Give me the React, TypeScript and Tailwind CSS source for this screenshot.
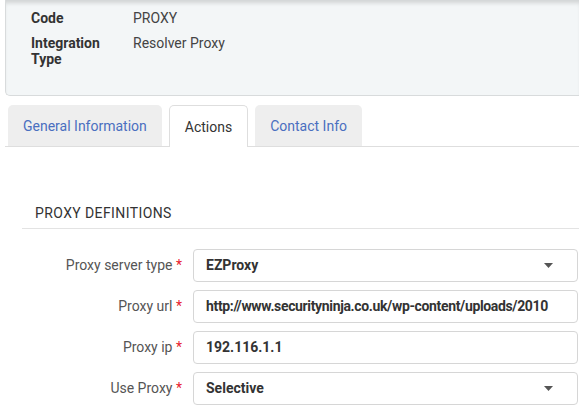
const font = { fontFamily: "Roboto, 'Liberation Sans', sans-serif" };

function Caret() {
  return (
    <svg width="9" height="5" viewBox="0 0 9 5" className="shrink-0">
      <path d="M0 0 L9 0 L4.5 5 Z" fill="#555" />
    </svg>
  );
}

function FieldRow({
  label,
  value,
  select,
  tight,
}: {
  label: string;
  value: string;
  select?: boolean;
  tight?: boolean;
}) {
  return (
    <div className="flex items-center h-[33px]">
      <div className="w-[171px] shrink-0 text-right text-[14px] text-[#555] pr-[11px] whitespace-nowrap">
        {label} <span className="text-[#e8222f]">*</span>
      </div>
      <div
        className={`flex-1 h-[33px] border border-[#d6d6d6] rounded-[4px] bg-white flex items-center pl-[12px] overflow-hidden ${
          select ? "pr-[24px]" : "pr-[6px]"
        }`}
      >
        <span
          className={`flex-1 text-[14px] font-bold text-[#333] whitespace-nowrap overflow-hidden ${
            tight ? "tracking-[-0.35px]" : ""
          }`}
        >
          {value}
        </span>
        {select && <Caret />}
      </div>
    </div>
  );
}

export default function App() {
  const tabs = [
    { label: "General Information", active: false },
    { label: "Actions", active: true },
    { label: "Contact Info", active: false },
  ];

  return (
    <div className="w-[579px] h-[410px] bg-white overflow-hidden" style={font}>
      <div className="ml-[5px] h-[96px] bg-[#f3f6f7] rounded-bl-[5px] border-l border-b border-[#d8dbdc] shadow-[inset_0_5px_4px_-2px_rgba(0,0,0,0.14)] pt-[10px] pl-[25px]">
        <div className="grid grid-cols-[102px_1fr] gap-y-[9px] text-[14px] leading-[16px] text-[#333]">
          <div className="font-bold pr-[14px]">Code</div>
          <div className="text-[#444]">PROXY</div>
          <div className="font-bold pr-[14px]">Integration Type</div>
          <div className="text-[#444]">Resolver Proxy</div>
        </div>
      </div>

      <div className="mt-[9px] ml-[5px] flex items-end gap-[7px] pl-[3px] border-b border-[#dedede] h-[42px]">
        {tabs.map((tab) => (
          <div
            key={tab.label}
            className={`px-[15px] flex items-center rounded-t-[5px] text-[14px] pt-[1px] ${
              tab.active
                ? "bg-white border border-b-0 border-[#dedede] text-[#333] h-[42px] mb-[-1px]"
                : "bg-[#eeeeee] text-[#4a6fc0] h-[41px]"
            }`}
          >
            {tab.label}
          </div>
        ))}
      </div>

      <div className="pl-[22px] pt-[56px]">
        <div className="pl-[13px] pb-[5px] border-b border-[#e3e3e3] text-[14px] tracking-[0.4px] text-[#333] leading-[20px]">
          PROXY DEFINITIONS
        </div>
        <div className="pt-[20px] flex flex-col gap-[8px] pr-[1px]">
          <FieldRow label="Proxy server type" value="EZProxy" select />
          <FieldRow
            label="Proxy url"
            value="http://www.securityninja.co.uk/wp-content/uploads/2010"
            tight
          />
          <FieldRow label="Proxy ip" value="192.116.1.1" />
          <FieldRow label="Use Proxy" value="Selective" select />
        </div>
      </div>
    </div>
  );
}
